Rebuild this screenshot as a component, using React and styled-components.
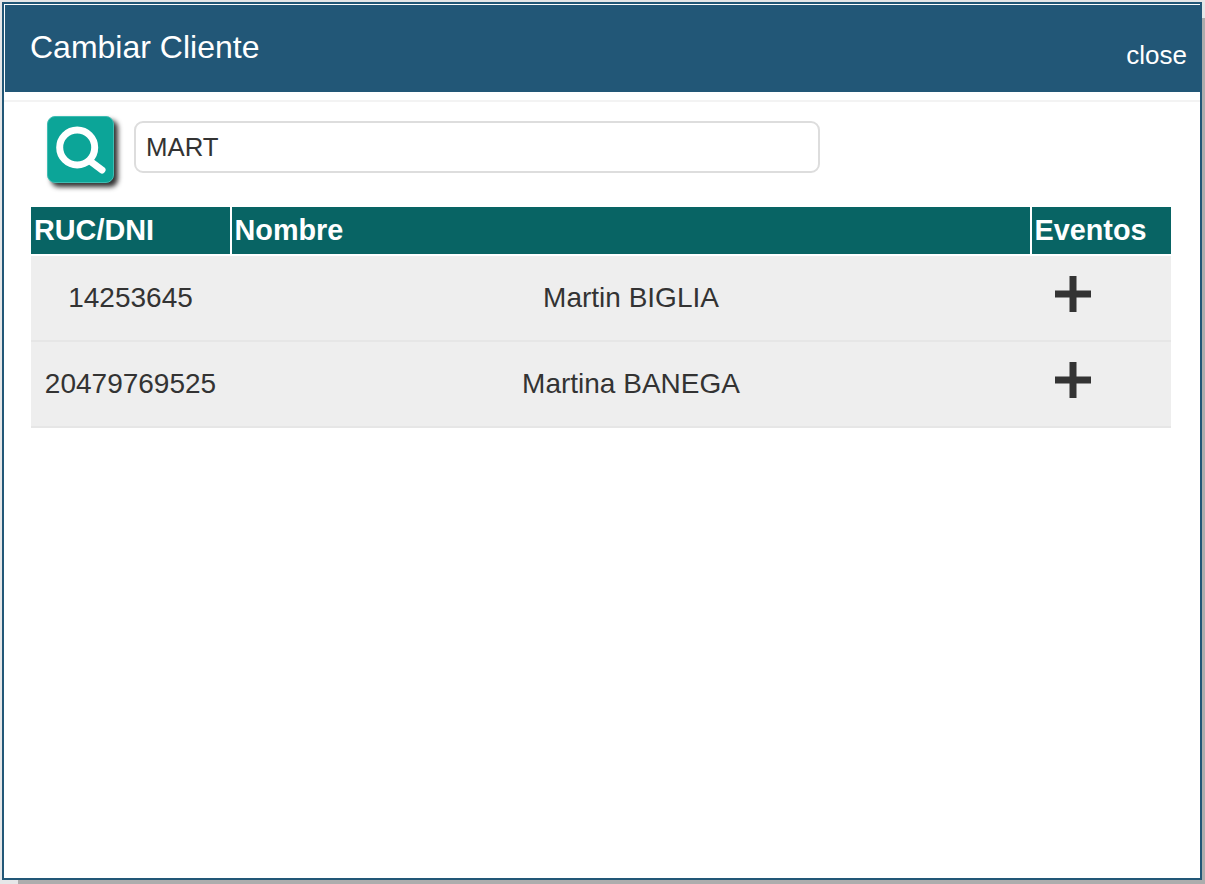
import React from 'react';
import styled, { createGlobalStyle } from 'styled-components';

const COLORS = {
  NAVY: '#225777',
  TEAL: '#086464',
  BUTTON: '#0ca598',
  ROW: '#eeeeee',
  LINE: '#e6e6e6',
  TEXT: '#333333',
};

const GlobalStyle = createGlobalStyle`
  html, body {
    margin: 0;
    height: 100%;
    overflow: hidden;
    background: #e6e7e8;
  }
  body {
    font-family: "Liberation Sans", Arial, sans-serif;
    color: ${COLORS.TEXT};
  }
`;

const Dialog = styled.div`
  box-sizing: border-box;
  width: 1200px;
  height: 878px;
  margin: 2px 0 0 2px;
  background: #ffffff;
  border: 2px solid ${COLORS.NAVY};
  box-shadow: 16px 16px 0 #adadad;
  display: flex;
  flex-direction: column;
`;

const Header = styled.header`
  box-sizing: border-box;
  height: 87px;
  margin: 1px 0 0 1px;
  padding: 0 13px 0 25px;
  background: ${COLORS.NAVY};
  color: #ffffff;
  display: flex;
  align-items: flex-start;
  justify-content: space-between;
`;

const Title = styled.h2`
  margin: 22px 0 0;
  font-size: 32px;
  line-height: 40px;
  font-weight: 400;
`;

const Close = styled.a`
  margin-top: 35px;
  font-size: 26px;
  line-height: 30px;
`;

const Body = styled.div`
  flex: 1;
  margin-top: 8px;
  border-top: 2px solid #f3f3f3;
  padding: 14px 30px 0 27px;
`;

const SearchRow = styled.div`
  display: flex;
  align-items: flex-start;
  margin-left: 16px;
`;

const SearchButton = styled.button`
  box-sizing: border-box;
  width: 67px;
  height: 67px;
  padding: 0;
  border: 1px solid #3fbdb3;
  border-radius: 8px;
  background: ${COLORS.BUTTON};
  box-shadow: 4px 4px 5px #333333;
  display: flex;
  align-items: center;
  justify-content: center;
`;

const SearchInput = styled.input`
  box-sizing: border-box;
  width: 686px;
  height: 52px;
  margin: 5px 0 0 20px;
  padding: 0 10px;
  border: 2px solid #dddddd;
  border-radius: 9px;
  outline: none;
  background: #ffffff;
  color: ${COLORS.TEXT};
  font-family: inherit;
  font-size: 25.8px;
`;

const Results = styled.table`
  width: 1140px;
  margin: 24px 0 0 0;
  border-collapse: separate;
  border-spacing: 0;
  table-layout: fixed;
`;

const HeadCell = styled.th`
  box-sizing: border-box;
  width: ${props => props.width}px;
  height: 49px;
  padding: 0 0 0 ${props => (props.first ? '3px' : '2.5px')};
  background: ${COLORS.TEAL};
  background-clip: padding-box;
  border-bottom: 2px solid #ffffff;
  border-right: ${props => (props.last ? '0' : '2px solid #ffffff')};
  color: #ffffff;
  font-size: 28.8px;
  font-weight: 700;
  text-align: left;
`;

const Cell = styled.td`
  box-sizing: border-box;
  height: 86px;
  padding: 0 2px 0 0;
  background: ${COLORS.ROW};
  border-bottom: 2px solid ${COLORS.LINE};
  font-size: 28px;
  text-align: center;
`;

const ActionCell = styled(Cell)`
  padding: 0 0 0 23px;
  text-align: left;
  vertical-align: top;
`;

const AddIcon = styled.svg`
  display: block;
  width: 36px;
  height: 36px;
  margin-top: 20px;
  fill: ${COLORS.TEXT};
`;

const clients = [
  { id: '14253645', name: 'Martin BIGLIA' },
  { id: '20479769525', name: 'Martina BANEGA' },
];

const App = () => (
  <>
    <GlobalStyle />
    <Dialog>
      <Header>
        <Title>Cambiar Cliente</Title>
        <Close>close</Close>
      </Header>
      <Body>
        <SearchRow>
          <SearchButton aria-label="Buscar">
            <svg width="54" height="54" viewBox="0 0 54 54" fill="none" stroke="#ffffff">
              <circle cx="23.2" cy="24.5" r="17.5" strokeWidth="7" />
              <path d="M36 38 L48 47" strokeWidth="7" strokeLinecap="round" />
            </svg>
          </SearchButton>
          <SearchInput defaultValue="MART" />
        </SearchRow>
        <Results>
          <thead>
            <tr>
              <HeadCell width={201} first>RUC/DNI</HeadCell>
              <HeadCell width={800}>Nombre</HeadCell>
              <HeadCell width={139} last>Eventos</HeadCell>
            </tr>
          </thead>
          <tbody>
            {clients.map(client => (
              <tr key={client.id}>
                <Cell>{client.id}</Cell>
                <Cell>{client.name}</Cell>
                <ActionCell>
                  <AddIcon viewBox="0 0 36 36">
                    <path d="M14.5 0h7v14.5H36v7H21.5V36h-7V21.5H0v-7h14.5z" />
                  </AddIcon>
                </ActionCell>
              </tr>
            ))}
          </tbody>
        </Results>
      </Body>
    </Dialog>
  </>
);

export default App;
